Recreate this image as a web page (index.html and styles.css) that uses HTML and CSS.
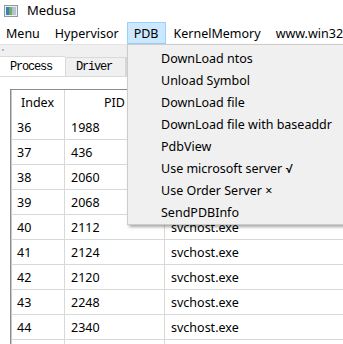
FILE: index.html
```html
<!DOCTYPE html>
<html>
<head>
<meta charset="utf-8">
<link rel="stylesheet" href="styles.css">
</head>
<body>
<div class="window">
  <div class="titlebar">
    <svg class="appicon" width="14" height="12" viewBox="0 0 14 12">
      <rect x="0.5" y="0.5" width="13" height="11" fill="#e8eef2" stroke="#8a9aa6"/>
      <rect x="2" y="2" width="3" height="8" fill="#3a7fb8"/>
      <rect x="5" y="2" width="3" height="8" fill="#6fae6a"/>
      <rect x="8" y="2" width="4" height="8" fill="#b9c3cb"/>
    </svg>
    <span class="title">Medusa</span>
  </div>
  <div class="menubar">
    <span class="mitem first">Menu</span>
    <span class="mitem">Hypervisor</span>
    <span class="mitem active">PDB</span>
    <span class="mitem">KernelMemory</span>
    <span class="mitem">www.win32k</span>
  </div>
  <div class="strip"><span class="grip"></span></div>
  <div class="tabs">
    <span class="tab selected">Process</span>
    <span class="tab">Driver</span>
    <span class="tab blank"></span>
  </div>
  <div class="pane">
    <div class="table">
      <div class="row head">
        <span class="c1 center">Index</span><span class="c2 center">PID</span><span class="c3 center"></span>
      </div>
      <div class="row"><span class="c1">36</span><span class="c2">1988</span><span class="c3"></span></div>
      <div class="row"><span class="c1">37</span><span class="c2">436</span><span class="c3"></span></div>
      <div class="row"><span class="c1">38</span><span class="c2">2060</span><span class="c3"></span></div>
      <div class="row"><span class="c1">39</span><span class="c2">2068</span><span class="c3"></span></div>
      <div class="row"><span class="c1">40</span><span class="c2">2112</span><span class="c3">svchost.exe</span></div>
      <div class="row"><span class="c1">41</span><span class="c2">2124</span><span class="c3">svchost.exe</span></div>
      <div class="row"><span class="c1">42</span><span class="c2">2120</span><span class="c3">svchost.exe</span></div>
      <div class="row"><span class="c1">43</span><span class="c2">2248</span><span class="c3">svchost.exe</span></div>
      <div class="row"><span class="c1">44</span><span class="c2">2340</span><span class="c3">svchost.exe</span></div>
      <div class="row"><span class="c1"></span><span class="c2"></span><span class="c3"></span></div>
    </div>
  </div>
  <div class="dropdown">
    <div class="ditem">DownLoad ntos</div>
    <div class="ditem">Unload Symbol</div>
    <div class="ditem">DownLoad file</div>
    <div class="ditem">DownLoad file with baseaddr</div>
    <div class="ditem">PdbView</div>
    <div class="ditem">Use microsoft server <span class="mark">√</span></div>
    <div class="ditem">Use Order Server ×</div>
    <div class="ditem">SendPDBInfo</div>
  </div>
</div>
</body>
</html>
```

FILE: styles.css
```css
html, body {
  margin: 0;
  padding: 0;
  background: #ffffff;
}
.window {
  position: relative;
  width: 343px;
  height: 344px;
  overflow: hidden;
  font-family: "Noto Sans", "Noto Sans CJK SC", sans-serif;
  font-size: 12.5px;
  color: #000;
}
.titlebar {
  height: 22px;
  display: flex;
  align-items: center;
  padding-left: 4px;
  background: #fff;
}
.appicon {
  display: block;
  margin-top: -1px;
}
.title {
  margin-left: 9px;
  margin-top: -2px;
  font-size: 13px;
}
.menubar {
  height: 22px;
  display: flex;
  align-items: stretch;
  white-space: nowrap;
  background: #fff;
  overflow: hidden;
}
.mitem {
  display: flex;
  align-items: center;
  padding: 0 6px;
  margin-right: 1px;
  border: 1px solid transparent;
  box-sizing: border-box;
}
.mitem.first {
  padding-left: 5px;
}
.mitem.active {
  background: #cce8ff;
  border-color: #99d1ff;
}
.strip {
  height: 12px;
  background: #f0f0f0;
  border-top: 1px solid #e3e3e3;
  box-sizing: border-box;
  position: relative;
}
.grip {
  position: absolute;
  left: 2px;
  top: 4px;
  width: 2px;
  height: 2px;
  background: #b8b8b8;
}
.tabs {
  height: 20px;
  display: flex;
  align-items: flex-end;
  background: #f0f0f0;
  font-family: "Liberation Mono", monospace;
  font-size: 12px;
  letter-spacing: -1.2px;
}
.tab {
  height: 19px;
  box-sizing: border-box;
  border: 1px solid #d9d9d9;
  border-bottom: none;
  display: flex;
  align-items: center;
  padding: 0 13px 0 10px;
  background: #f0f0f0;
}
.tab.blank {
  width: 60px;
}
.tab.selected {
  height: 20px;
  width: 65px;
  background: #fff;
  padding: 0 0 0 10px;
  border-left: none;
  border-right: none;
}
.pane {
  background: #fff;
  padding: 12px 0 0 10px;
  border-top: 1px solid #d9d9d9;
}
.table {
  border-left: 1px solid #8c8c8c;
  border-top: 1px solid #8c8c8c;
  box-shadow: inset 1px 0 0 #c8c8c8;
}
.row {
  display: flex;
  height: 25px;
  border-bottom: 1px solid #d8d8d8;
  box-sizing: border-box;
}
.row.head {
  border-bottom: none;
}
.row span {
  display: flex;
  align-items: center;
  box-sizing: border-box;
  padding-left: 6px;
}
.row span.center {
  justify-content: center;
  padding-left: 0;
}
.c1 {
  width: 54px;
  border-right: 1px solid #d8d8d8;
}
.c2 {
  width: 100px;
  border-right: 1px solid #d8d8d8;
}
.c3 {
  flex: 1;
}
.dropdown {
  position: absolute;
  left: 127px;
  top: 44px;
  width: 222px;
  padding: 3px 0 0 0;
  background: #f0f0f0;
  border: 1px solid #cccccc;
  box-shadow: 2px 2px 3px rgba(0, 0, 0, 0.35);
  white-space: nowrap;
}
.ditem {
  height: 22px;
  line-height: 22px;
  padding-left: 33px;
}
.mark {
  font-family: "Inter", "DejaVu Sans", sans-serif;
  font-size: 12px;
}
```
